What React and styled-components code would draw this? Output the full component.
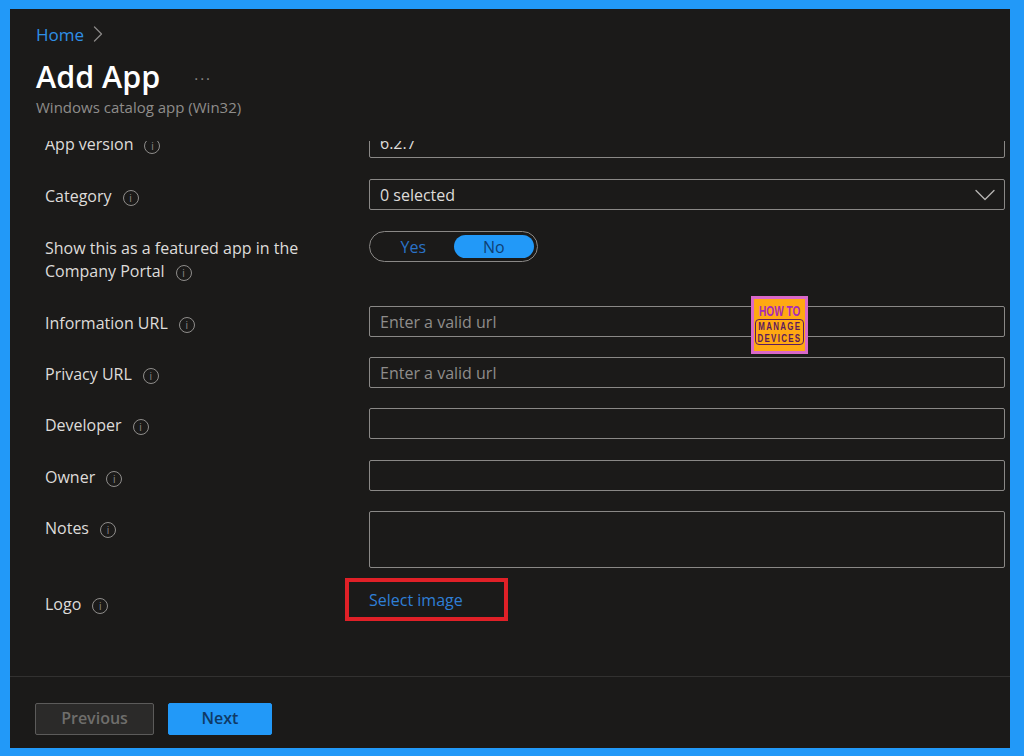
import React from "react";
import styled, { createGlobalStyle } from "styled-components";
import { ChevronRight, ChevronDown } from "lucide-react";

const GlobalStyle = createGlobalStyle`
  html, body {
    margin: 0;
    height: 756px;
    overflow: hidden;
    background: #2299f8;
    font-family: "Open Sans", "Noto Sans", "Liberation Sans", sans-serif;
  }
`;

const Page = styled.div`
  position: relative;
  box-sizing: border-box;
  width: 1024px;
  height: 756px;
  padding: 9px 14px 8px 10px;
`;

const Panel = styled.div`
  height: 739px;
  display: flex;
  flex-direction: column;
  background: #1b1a19;
  color: #e4e3e1;
`;

const Header = styled.header`
  height: 132px;
  flex-shrink: 0;
  padding: 14px 0 0 26px;
  box-sizing: border-box;
`;

const Breadcrumb = styled.div`
  display: flex;
  align-items: center;
  height: 22px;
  font-size: 17px;
  color: #2f8fe6;
  svg {
    color: #8a8886;
  }
`;

const TitleRow = styled.div`
  display: flex;
  align-items: center;
  margin-top: 9px;
  height: 44px;
`;

const Title = styled.h1`
  margin: 0;
  font-size: 30.5px;
  font-weight: 600;
  color: #ffffff;
  line-height: 44px;
`;

const More = styled.span`
  margin-left: 34px;
  font-size: 15px;
  letter-spacing: 2px;
  color: #8a8886;
  position: relative;
  top: -2px;
`;

const Subtitle = styled.div`
  font-size: 15px;
  line-height: 18px;
  color: #8f8d8b;
`;

const Scroller = styled.div`
  flex: 1;
  min-height: 0;
  overflow: hidden;
`;

const Form = styled.div`
  margin-top: -14px;
  padding: 0 5px 0 35px;
  display: flex;
  flex-direction: column;
`;

const Row = styled.div`
  display: grid;
  grid-template-columns: 324px 636px;
  align-items: ${p => (p.$top ? "start" : "center")};
  margin-bottom: ${p => p.$gap ?? 21}px;
`;

const Label = styled.div`
  font-size: 16px;
  line-height: 23px;
  color: #dedcda;
  padding-top: ${p => p.$pad ?? 4}px;
`;

const InfoMark = styled.span`
  display: inline-flex;
  align-items: center;
  justify-content: center;
  width: 16px;
  height: 16px;
  margin-left: 11px;
  border: 1px solid #8f8d8b;
  border-radius: 50%;
  color: #8f8d8b;
  font-size: 10px;
  line-height: 1;
  vertical-align: 0;
  box-sizing: border-box;
`;

const Field = styled.div`
  box-sizing: border-box;
  height: ${p => p.$h ?? 31}px;
  display: flex;
  align-items: center;
  justify-content: space-between;
  padding: 0 10px;
  border: 1px solid #8a8886;
  border-radius: 2px;
  font-size: 16px;
  color: ${p => (p.$placeholder ? "#8f8d8b" : "#dedcda")};
  svg {
    color: #b5b3b1;
    margin: -6px -9px -6px 0;
  }
`;

const Toggle = styled.div`
  box-sizing: border-box;
  width: 169px;
  height: 31px;
  padding: 3px;
  display: grid;
  grid-template-columns: 1fr 1fr;
  border: 1px solid #8a8886;
  border-radius: 16px;
  font-size: 16px;
`;

const ToggleOption = styled.div`
  display: flex;
  align-items: center;
  justify-content: center;
  border-radius: 12px;
  background: ${p => (p.$active ? "#2299f8" : "transparent")};
  color: ${p => (p.$active ? "#0f3f73" : "#2a72c8")};
`;

const SelectImage = styled.a`
  box-sizing: border-box;
  width: 163px;
  height: 43px;
  margin-left: -24px;
  padding-left: 20px;
  display: flex;
  align-items: center;
  border: 4px solid #e02027;
  font-size: 16px;
  color: #2f7fd6;
`;

const Footer = styled.footer`
  box-sizing: border-box;
  height: 72px;
  flex-shrink: 0;
  display: flex;
  align-items: flex-start;
  gap: 14px;
  padding: 26px 0 0 25px;
  border-top: 1px solid #323130;
`;

const Button = styled.button`
  box-sizing: border-box;
  width: ${p => p.$w}px;
  height: 32px;
  padding: 0 0 2px;
  border-radius: 2px;
  font-family: inherit;
  font-size: 16px;
  font-weight: 600;
  border: 1px solid ${p => (p.$primary ? "#2299f8" : "#5c5b5a")};
  background: ${p => (p.$primary ? "#2299f8" : "#2b2a29")};
  color: ${p => (p.$primary ? "#0f3a66" : "#6f6e6c")};
`;

const Badge = styled.div`
  position: absolute;
  left: 751px;
  top: 296px;
  box-sizing: border-box;
  width: 57px;
  height: 58px;
  padding-top: 4px;
  display: flex;
  flex-direction: column;
  align-items: center;
  background: #ffa912;
  border: 3px solid #d968c8;
  font-family: "Liberation Sans", sans-serif;
  font-weight: 700;
  color: #a82bb8;
`;

const BadgeTop = styled.div`
  font-size: 14px;
  line-height: 16px;
  transform: scaleX(0.72);
  white-space: nowrap;
`;

const BadgeBox = styled.div`
  width: 49px;
  height: 26px;
  box-sizing: border-box;
  display: flex;
  flex-direction: column;
  align-items: center;
  border: 1px solid #5c1a5e;
  border-radius: 4px;
  color: #5c1a5e;
`;

const BadgeLine = styled.span`
  font-size: 11px;
  line-height: 12px;
  letter-spacing: 1.8px;
  white-space: nowrap;
  transform: scaleX(0.72);
`;

const Info = () => <InfoMark>i</InfoMark>;

const urls = ["Information URL", "Privacy URL"];

const App = () => (
  <Page>
    <GlobalStyle />
    <Panel>
      <Header>
        <Breadcrumb>
          Home <ChevronRight size={28} strokeWidth={1.1} />
        </Breadcrumb>
        <TitleRow>
          <Title>Add App</Title>
          <More>...</More>
        </TitleRow>
        <Subtitle>Windows catalog app (Win32)</Subtitle>
      </Header>
      <Scroller>
        <Form>
          <Row>
            <Label>App version<Info /></Label>
            <Field>6.2.7</Field>
          </Row>
          <Row>
            <Label>Category<Info /></Label>
            <Field>
              0 selected
              <ChevronDown size={36} strokeWidth={0.9} />
            </Field>
          </Row>
          <Row $top $gap={23}>
            <Label $pad={6}>
              Show this as a featured app in the
              <br />
              Company Portal<Info />
            </Label>
            <Toggle>
              <ToggleOption>Yes</ToggleOption>
              <ToggleOption $active>No</ToggleOption>
            </Toggle>
          </Row>
          {urls.map(name => (
            <Row key={name} $gap={20}>
              <Label>{name}<Info /></Label>
              <Field $placeholder>Enter a valid url</Field>
            </Row>
          ))}
          <Row $gap={21}>
            <Label>Developer<Info /></Label>
            <Field />
          </Row>
          <Row $gap={20}>
            <Label>Owner<Info /></Label>
            <Field />
          </Row>
          <Row $top $gap={10}>
            <Label $pad={6}>Notes<Info /></Label>
            <Field $h={57} />
          </Row>
          <Row>
            <Label $pad={10}>Logo<Info /></Label>
            <SelectImage>Select image</SelectImage>
          </Row>
        </Form>
      </Scroller>
      <Footer>
        <Button $w={119}>Previous</Button>
        <Button $primary $w={104}>Next</Button>
      </Footer>
    </Panel>
    <Badge>
      <BadgeTop>HOW TO</BadgeTop>
      <BadgeBox>
        <BadgeLine>MANAGE</BadgeLine>
        <BadgeLine>DEVICES</BadgeLine>
      </BadgeBox>
    </Badge>
  </Page>
);

export default App;
